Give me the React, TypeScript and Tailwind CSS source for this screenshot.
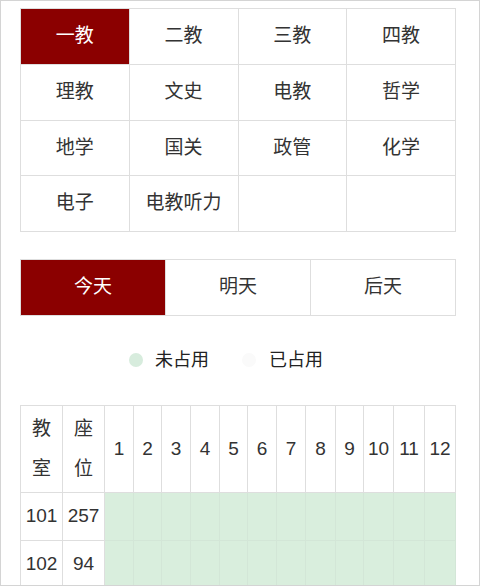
import React from "react";

const buildings = [
  "一教", "二教", "三教", "四教",
  "理教", "文史", "电教", "哲学",
  "地学", "国关", "政管", "化学",
  "电子", "电教听力", "", "",
];

const days = ["今天", "明天", "后天"];
const colW = [42, 42, 29, 28, 29, 29, 28, 29, 29, 30, 28, 30, 31, 31];
const rooms = [
  ["101", "257"],
  ["102", "94"],
];

export default function App() {
  return (
    <div
      className="w-[480px] h-[586px] overflow-hidden border border-[#d4d4d4] bg-white text-[#333]"
      style={{ fontFamily: '"Liberation Sans", "Noto Sans CJK SC", sans-serif' }}
    >
      <div className="px-[19px] pt-[7px]">
        <div className="grid w-[436px] grid-cols-4 grid-rows-4 gap-px bg-[#dedede] p-px h-[224px]">
          {buildings.map((b, i) => (
            <div
              key={i}
              className={`flex items-center justify-center text-[19px] ${
                i === 0 ? "bg-[#8b0000] text-white" : "bg-white"
              }`}
            >
              {b}
            </div>
          ))}
        </div>

        <div className="mt-[27px] grid w-[436px] grid-cols-3 gap-px bg-[#dedede] p-px h-[57px]">
          {days.map((d, i) => (
            <div
              key={d}
              className={`flex items-center justify-center text-[19px] ${
                i === 0 ? "bg-[#8b0000] text-white" : "bg-white"
              }`}
            >
              {d}
            </div>
          ))}
        </div>

        <div className="mt-[32px] flex items-center h-[24px] pl-[109px] text-[18px] leading-[24px] text-[#222]">
          <span className="w-[14px] h-[14px] rounded-full bg-[#d7ecdd]" />
          <span className="ml-[12px]">未占用</span>
          <span className="ml-[33px] w-[14px] h-[14px] rounded-full bg-[#fafafa]" />
          <span className="ml-[13px]">已占用</span>
        </div>

        <table className="mt-[33px] w-[436px] table-fixed border-collapse text-[19px]">
          <colgroup>
            {colW.map((w, i) => (
              <col key={i} style={{ width: w }} />
            ))}
          </colgroup>
          <thead>
            <tr className="h-[87px]">
              <th className="border border-[#dedede] font-normal leading-[40px] p-0">
                教<br />室
              </th>
              <th className="border border-[#dedede] font-normal leading-[40px] p-0">
                座<br />位
              </th>
              {Array.from({ length: 12 }, (_, i) => (
                <th key={i} className="border border-[#dedede] font-normal p-0">
                  {i + 1}
                </th>
              ))}
            </tr>
          </thead>
          <tbody>
            {rooms.map(([r, s]) => (
              <tr key={r} className="h-[48px]">
                <td className="border border-[#dedede] text-center p-0">{r}</td>
                <td className="border border-[#dedede] text-center p-0">{s}</td>
                {Array.from({ length: 12 }, (_, i) => (
                  <td key={i} className="border border-[#d3e6d7] bg-[#d9eedd] p-0" />
                ))}
              </tr>
            ))}
          </tbody>
        </table>
      </div>
    </div>
  );
}
